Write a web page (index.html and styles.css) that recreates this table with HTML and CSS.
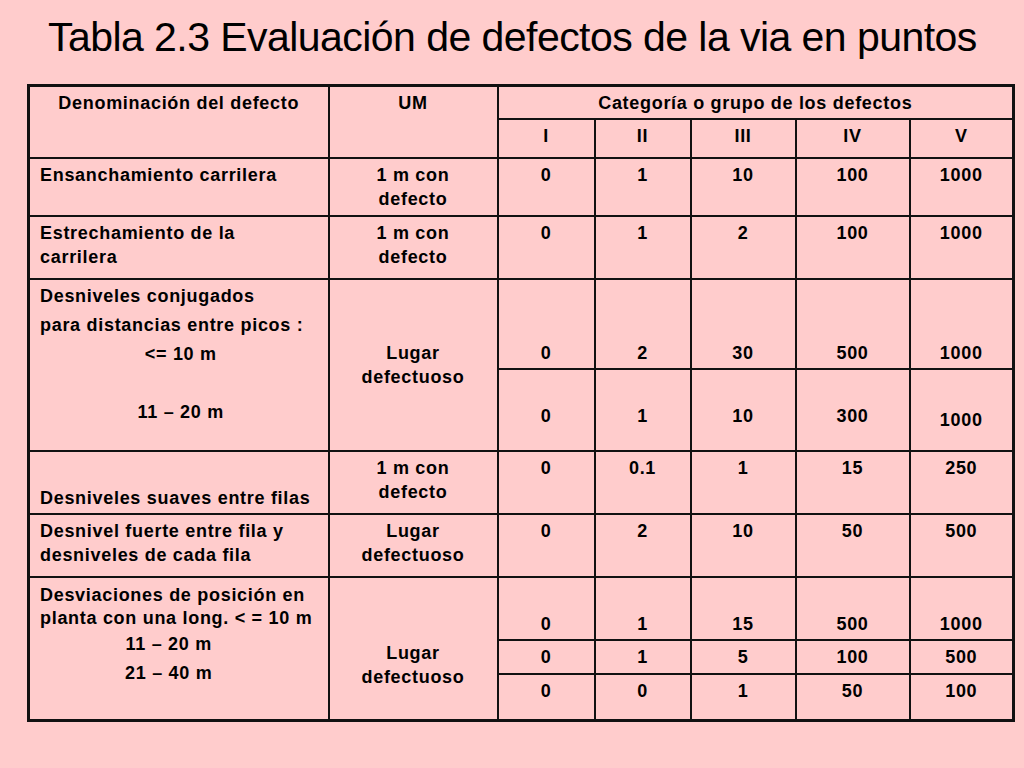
FILE: index.html
```html
<!DOCTYPE html>
<html lang="es">
<head>
<meta charset="utf-8">
<title>Tabla 2.3</title>
<link rel="stylesheet" href="styles.css">
</head>
<body>
<h1 class="title">Tabla 2.3 Evaluación de defectos de la via en puntos</h1>
<table class="grid">
  <colgroup>
    <col class="c-name"><col class="c-um"><col class="c-1"><col class="c-2"><col class="c-3"><col class="c-4"><col class="c-5">
  </colgroup>
  <tr class="h-a">
    <th rowspan="2" class="ctr">Denominación del defecto</th>
    <th rowspan="2" class="ctr">UM</th>
    <th colspan="5" class="ctr">Categoría o grupo de los defectos</th>
  </tr>
  <tr class="h-b">
    <th>I</th><th>II</th><th>III</th><th>IV</th><th>V</th>
  </tr>
  <tr class="r-2">
    <td class="name">Ensanchamiento carrilera</td>
    <td>1 m con<br>defecto</td>
    <td>0</td><td>1</td><td>10</td><td>100</td><td>1000</td>
  </tr>
  <tr class="r-3">
    <td class="name">Estrechamiento de la<br>carrilera</td>
    <td>1 m con<br>defecto</td>
    <td>0</td><td>1</td><td>2</td><td>100</td><td>1000</td>
  </tr>
  <tr class="r-4">
    <td rowspan="2" class="name conj">
      <div class="ln">Desniveles conjugados</div>
      <div class="ln">para distancias entre picos :</div>
      <div class="ln ctr">&lt;= 10 m</div>
      <div class="ln">&nbsp;</div>
      <div class="ln ctr">11 – 20 m</div>
    </td>
    <td rowspan="2" class="mid">Lugar<br>defectuoso</td>
    <td class="bot">0</td><td class="bot">2</td><td class="bot">30</td><td class="bot">500</td><td class="bot">1000</td>
  </tr>
  <tr class="r-5">
    <td class="low">0</td><td class="low">1</td><td class="low">10</td><td class="low">300</td><td class="lower">1000</td>
  </tr>
  <tr class="r-6">
    <td class="name bot">Desniveles suaves entre filas</td>
    <td>1 m con<br>defecto</td>
    <td>0</td><td>0.1</td><td>1</td><td>15</td><td>250</td>
  </tr>
  <tr class="r-7">
    <td class="name">Desnivel fuerte entre fila y<br>desniveles de cada fila</td>
    <td>Lugar<br>defectuoso</td>
    <td>0</td><td>2</td><td>10</td><td>50</td><td>500</td>
  </tr>
  <tr class="r-8">
    <td rowspan="3" class="name desv">
      <div class="ln-s">Desviaciones de posición en</div>
      <div class="ln-s">planta con una long. &lt; = 10 m</div>
      <div class="ln ctr shift">11 – 20 m</div>
      <div class="ln ctr shift">21 – 40 m</div>
    </td>
    <td rowspan="3" class="um-desv">Lugar<br>defectuoso</td>
    <td class="bot">0</td><td class="bot">1</td><td class="bot">15</td><td class="bot">500</td><td class="bot">1000</td>
  </tr>
  <tr class="r-9">
    <td>0</td><td>1</td><td>5</td><td>100</td><td>500</td>
  </tr>
  <tr class="r-10">
    <td>0</td><td>0</td><td>1</td><td>50</td><td>100</td>
  </tr>
</table>
</body>
</html>
```

FILE: styles.css
```css
html, body {
  margin: 0;
  padding: 0;
  background: #ffcccc;
}

body {
  font-family: "Liberation Sans", Arial, sans-serif;
  color: #000;
  width: 1024px;
  height: 768px;
  overflow: hidden;
}

.title {
  margin: 13px 0 0 48px;
  font-size: 41px;
  font-weight: normal;
  line-height: 48px;
  letter-spacing: -0.55px;
  white-space: nowrap;
}

.grid {
  margin: 23px 0 0 27px;
  width: 985px;
  table-layout: fixed;
  border-collapse: collapse;
  border: 3px solid #111;
  font-size: 18px;
  font-weight: bold;
  letter-spacing: 0.7px;
}

.c-name { width: 300px; }
.c-um { width: 169px; }
.c-1 { width: 97px; }
.c-2 { width: 96px; }
.c-3 { width: 105px; }
.c-4 { width: 114px; }
.c-5 { width: 104px; }

.grid th,
.grid td {
  border: 2px solid #111;
  padding: 4px 6px 0;
  vertical-align: top;
  text-align: center;
  line-height: 24px;
  font-weight: bold;
  white-space: nowrap;
  overflow: hidden;
}

.grid .name {
  text-align: left;
  padding-left: 10px;
}

.ctr { text-align: center; }

.h-a { height: 33px; }
.h-b { height: 39px; }
.r-2 { height: 58px; }
.r-3 { height: 63px; }
.r-4 { height: 90px; }
.r-5 { height: 82px; }
.r-6 { height: 63px; }
.r-7 { height: 63px; }
.r-8 { height: 63px; }
.r-9 { height: 34px; }
.r-10 { height: 47px; }

.grid td.bot {
  vertical-align: bottom;
  padding-bottom: 3px;
}

.grid td.mid {
  vertical-align: middle;
  padding-top: 0;
}

.grid td.low {
  padding-top: 34px;
}

.grid td.lower {
  padding-top: 38px;
}

.grid td.conj {
  padding-top: 2px;
}

.conj .ln {
  line-height: 29px;
}

.grid td.desv {
  padding-top: 6px;
}

.desv .ln-s {
  line-height: 23px;
}

.desv .ln {
  line-height: 29px;
}

.shift {
  padding-right: 24px;
}

.grid td.um-desv {
  padding-top: 63px;
}
```
